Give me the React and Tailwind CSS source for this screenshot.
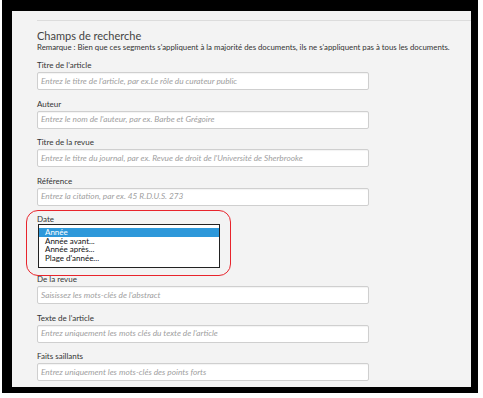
import React from 'react';

const fields = [
  { label: "Titre de l'article", ph: "Entrez le titre de l'article, par ex.Le rôle du curateur public" },
  { label: 'Auteur', ph: "Entrez le nom de l'auteur, par ex. Barbe et Grégoire" },
  { label: 'Titre de la revue', ph: "Entrez le titre du journal, par ex. Revue de droit de l'Université de Sherbrooke" },
  { label: 'Référence', ph: 'Entrez la citation, par ex. 45 R.D.U.S. 273' },
];

const moreFields = [
  { label: 'De la revue', ph: "Saisissez les mots-clés de l'abstract" },
  { label: "Texte de l'article", ph: "Entrez uniquement les mots clés du texte de l'article" },
  { label: 'Faits saillants', ph: 'Entrez uniquement les mots-clés des points forts' },
];

const dateOptions = ['Année', 'Année avant...', 'Année après...', "Plage d'année..."];

function Field({ label, ph }) {
  return (
    <div className="flex flex-col mb-[8.5px]">
      <label className="text-[8px] leading-[10px] text-[#333] mb-[2px]">{label}</label>
      <div className="w-[332px] h-[18px] bg-white border border-[#cfcfcf] rounded-[2px] shadow-[inset_0_1px_1px_rgba(0,0,0,0.05)] flex items-center px-[3px]">
        <span className="text-[8.3px] italic text-[#a0a0a0] whitespace-nowrap">{ph}</span>
      </div>
    </div>
  );
}

export default function App() {
  return (
    <div className="w-[483px] h-[398px] bg-white overflow-hidden" style={{ fontFamily: 'Lato, "Open Sans", sans-serif' }}>
      <div className="ml-[2px] w-[476px] h-[393px] bg-black pl-[10px] pt-[11px]">
        <div className="w-[459px] h-[376px] bg-[#f3f3f3] pl-[25px] pt-[9px]">
          <div className="h-px bg-[#dcdcdc]" />
          <h2 className="mt-[8px] text-[11px] leading-[13px] text-[#444] font-normal">Champs de recherche</h2>
          <p className="text-[7.8px] leading-[10px] text-[#333] mb-[8px] whitespace-nowrap">
            Remarque : Bien que ces segments s'appliquent à la majorité des documents, ils ne s'appliquent pas à tous les documents.
          </p>
          {fields.map((f) => (
            <Field key={f.label} {...f} />
          ))}
          <div className="relative flex flex-col mb-[6px]">
            <label className="text-[8px] leading-[10px] text-[#333]">Date</label>
            <div className="w-[182px] h-[44px] ml-px border border-[#222] bg-white pt-[3px] flex flex-col">
              {dateOptions.map((o, i) => (
                <div
                  key={o}
                  className={`h-[8.5px] leading-[8.5px] text-[8px] pl-[6px] ${i === 0 ? 'bg-[#2d98da] text-white' : 'text-[#111]'}`}
                >
                  {o}
                </div>
              ))}
            </div>
            <div className="absolute left-[-11px] top-[-4px] w-[205px] h-[66px] border-[1.5px] border-[#e8242c] rounded-[12px] pointer-events-none" />
          </div>
          {moreFields.map((f) => (
            <Field key={f.label} {...f} />
          ))}
        </div>
      </div>
    </div>
  );
}
